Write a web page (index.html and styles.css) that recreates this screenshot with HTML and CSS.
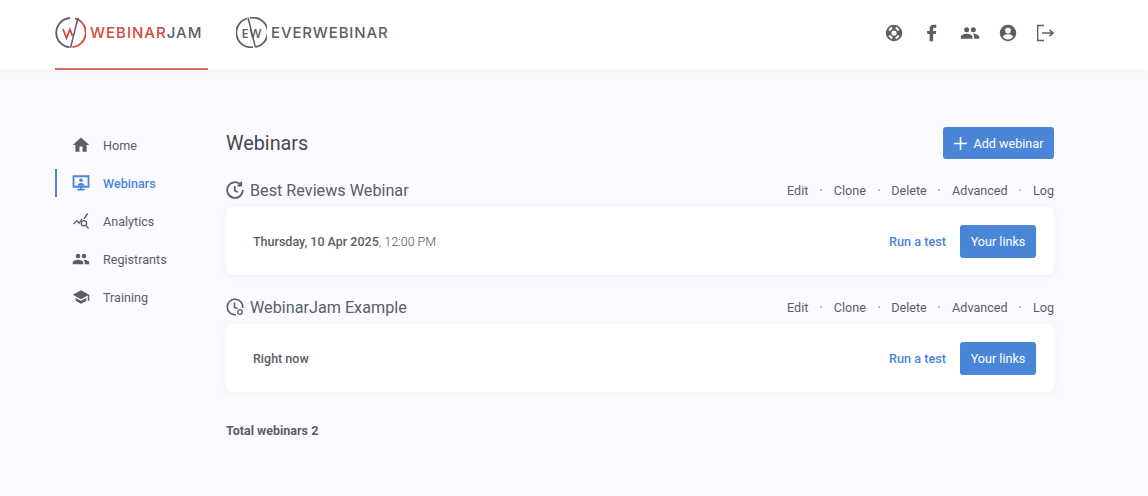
FILE: index.html
```html
<!doctype html>
<html lang="en">
<head>
	<meta charset="UTF-8">
	<title>Webinars</title>
	<link rel="stylesheet" href="styles.css">
</head>
<body>
	<header class="topbar">
		<div class="brands">
			<a class="brand brand-active" href="#">
				<svg class="brand-mark" width="31" height="31" viewBox="0 0 31 31" fill="none">
					<path d="M15 1A14.700 14.700 0 0 0 14.500 30.300" stroke="#5b6067" stroke-width="1.800"/>
					<path d="M20 1.400A14.700 14.700 0 0 1 17.500 30.200" stroke="#d2483b" stroke-width="1.800"/>
					<path d="M23 1 15.500 31" stroke="#5b6067" stroke-width="1.500"/>
					<path d="M8 12 11.500 21 15 12.500 17.500 19" stroke="#d2483b" stroke-width="1.800"/>
				</svg>
				<span class="brand-text"><span class="red">WEBINAR</span>JAM</span>
			</a>
			<a class="brand" href="#">
				<svg class="brand-mark" width="31" height="31" viewBox="0 0 31 31" fill="none">
					<path d="M11 1.500A14.700 14.700 0 0 0 17 30.200" stroke="#5b6067" stroke-width="1.800"/>
					<path d="M14 .9A14.700 14.700 0 0 1 20 29.800" stroke="#5b6067" stroke-width="1.800"/>
					<path d="M12 .5 19.500 30.500" stroke="#5b6067" stroke-width="1.500"/>
					<text x="5.500" y="21" class="mark-text">E</text>
					<text x="13.500" y="21" class="mark-text">W</text>
				</svg>
				<span class="brand-text wide">EVERWEBINAR</span>
			</a>
		</div>
		<nav class="top-icons">
			<a href="#"><svg width="18" height="18" viewBox="0 0 24 24" fill="#5a5e66"><path d="M12 1a11 11 0 1 0 0 22 11 11 0 0 0 0-22zm7.400 7.200-2.800 1.100a5 5 0 0 0-2.900-2.900l1.100-2.800a8.300 8.300 0 0 1 4.600 4.600zM12 15.500a3.500 3.500 0 1 1 0-7 3.500 3.500 0 0 1 0 7zM9.200 3.600l1.100 2.800a5 5 0 0 0-2.900 2.900L4.600 8.200a8.300 8.300 0 0 1 4.600-4.600zM4.600 15.800l2.800-1.100a5 5 0 0 0 2.900 2.900l-1.100 2.800a8.300 8.300 0 0 1-4.600-4.600zm10.200 4.600-1.100-2.800a5 5 0 0 0 2.900-2.900l2.800 1.100a8.300 8.300 0 0 1-4.600 4.600z"/></svg></a>
			<a href="#"><svg width="18" height="18" viewBox="0 0 24 24" fill="#5a5e66"><path d="M8.800 23V13.400H5.600V9.200h3.200V6.500C8.800 3 11 1 14.400 1c1.500 0 2.900.1 3.300.2v3.900h-2.200c-1.700 0-2 .8-2 2v2.100h4l-.5 4.200h-3.500V23z"/></svg></a>
			<a href="#"><svg width="20" height="20" viewBox="0 0 24 24" fill="#5a5e66"><path d="M16 11a3 3 0 1 0 0-6 3 3 0 0 0 0 6zm-8 0a3 3 0 1 0 0-6 3 3 0 0 0 0 6zm0 2c-2.300 0-7 1.200-7 3.500V19h14v-2.500C15 14.200 10.300 13 8 13zm8 0h-1c1.200.9 2 2 2 3.500V19h6v-2.500c0-2.300-4.700-3.500-7-3.500z"/></svg></a>
			<a href="#"><svg width="18" height="18" viewBox="0 0 24 24" fill="#5a5e66"><path d="M12 1a11 11 0 1 0 0 22 11 11 0 0 0 0-22zm0 4a3.800 3.800 0 1 1 0 7.600A3.800 3.800 0 0 1 12 5zm0 15.600c-2.800 0-5.300-1.400-6.800-3.600 0-2.200 4.500-3.400 6.800-3.400s6.800 1.200 6.800 3.400a8.300 8.300 0 0 1-6.800 3.600z"/></svg></a>
			<a href="#"><svg width="18" height="18" viewBox="1 0 18 18" fill="none" stroke="#5a5e66" stroke-width="1.600"><path d="M8 1.500H1.500v15H8"/><path d="M6 9h11M13.500 5.800 17 9l-3.500 3.200"/></svg></a>
		</nav>
	</header>

	<div class="layout">
		<aside class="sidebar">
			<a class="side-item" href="#">
				<svg width="18" height="18" viewBox="0 0 24 24" fill="#5a5e66"><path d="M10 21v-7h4v7h5.500v-9H23L12 2 1 12h3.500v9z"/></svg>
				<span>Home</span>
			</a>
			<a class="side-item active" href="#">
				<svg width="18" height="18" viewBox="0 0 24 24" fill="none"><path d="M2 3h20v14H2z" stroke="#4a86d8" stroke-width="2.400"/><circle cx="12" cy="8.300" r="2.400" fill="#4a86d8"/><path d="M7.500 15.500c0-2.600 2.500-3.600 4.500-3.600s4.500 1 4.500 3.600zM10.800 17h2.400v3h-2.400zM7 19.500h10V22H7z" fill="#4a86d8"/></svg>
				<span>Webinars</span>
			</a>
			<a class="side-item" href="#">
				<svg width="18" height="18" viewBox="0 0 24 24" fill="none" stroke="#5a5e66" stroke-width="1.800"><path d="M2 16l4.500-4.500 3 3.500 4-6M16 9l5-7"/><circle cx="16" cy="15" r="3.500"/><path d="M18.500 17.800 22 22"/></svg>
				<span>Analytics</span>
			</a>
			<a class="side-item" href="#">
				<svg width="20" height="20" viewBox="0 0 24 24" fill="#5a5e66"><path d="M16 11a3 3 0 1 0 0-6 3 3 0 0 0 0 6zm-8 0a3 3 0 1 0 0-6 3 3 0 0 0 0 6zm0 2c-2.300 0-7 1.200-7 3.500V19h14v-2.500C15 14.200 10.300 13 8 13zm8 0h-1c1.200.9 2 2 2 3.500V19h6v-2.500c0-2.300-4.700-3.500-7-3.500z"/></svg>
				<span>Registrants</span>
			</a>
			<a class="side-item" href="#">
				<svg width="20" height="20" viewBox="0 0 24 24" fill="#5a5e66"><path d="M5 13.200v4L12 21l7-3.800v-4L12 17zM12 3 1 9l11 6 9-4.900V17h2V9z"/></svg>
				<span>Training</span>
			</a>
		</aside>

		<main class="content">
			<div class="page-head">
				<h1>Webinars</h1>
				<a class="btn btn-add" href="#"><svg width="13" height="13" viewBox="0 0 13 13" stroke="#fff" stroke-width="1.600"><path d="M6.500 0v13M0 6.500h13"/></svg>Add webinar</a>
			</div>

			<section class="webinar">
				<div class="webinar-head">
					<h2>
						<svg width="18" height="18" viewBox="0 0 18 18" fill="none" stroke="#5a5e66" stroke-width="1.800"><path d="M14.500 3.500A7.800 7.800 0 1 0 16.800 9"/><path d="M15.200.8v3.700h-3.700"/><path d="M8.800 5v4.500l3 1.800"/></svg>
						Best Reviews Webinar
					</h2>
					<div class="actions"><a href="#">Edit</a><i></i><a href="#">Clone</a><i></i><a href="#">Delete</a><i></i><a href="#">Advanced</a><i></i><a href="#">Log</a></div>
				</div>
				<div class="card">
					<div class="when"><b>Thursday, 10 Apr 2025</b>, 12:00 PM</div>
					<a class="run" href="#">Run a test</a>
					<a class="btn" href="#">Your links</a>
				</div>
			</section>

			<section class="webinar">
				<div class="webinar-head">
					<h2>
						<svg width="18" height="18" viewBox="0 0 18 18" fill="none" stroke="#5a5e66" stroke-width="1.600"><path d="M10 16.700A7.800 7.800 0 1 1 16.700 10"/><path d="M8.500 4.500V9.500l3 1"/><circle cx="14" cy="14" r="2.300" stroke-width="1.200"/></svg>
						WebinarJam Example
					</h2>
					<div class="actions"><a href="#">Edit</a><i></i><a href="#">Clone</a><i></i><a href="#">Delete</a><i></i><a href="#">Advanced</a><i></i><a href="#">Log</a></div>
				</div>
				<div class="card">
					<div class="when"><b>Right now</b></div>
					<a class="run" href="#">Run a test</a>
					<a class="btn" href="#">Your links</a>
				</div>
			</section>

			<p class="total">Total webinars 2</p>
		</main>
	</div>
</body>
</html>
```

FILE: styles.css
```css
* { padding: 0; margin: 0; box-sizing: border-box; }
body { background: #fafaff; color: #5a5e66; font-family: Roboto, "Liberation Sans", sans-serif; font-size: 13px; }
a { color: inherit; text-decoration: none; }
svg { display: block; flex: none; }

.topbar { height: 70px; background: #fff; padding: 0 93px 0 55px; display: flex; justify-content: space-between; box-shadow: 0 1px 3px rgba(60, 60, 90, .06); }
.brands { display: flex; gap: 28px; }
.brand { display: flex; align-items: center; gap: 4px; height: 70px; padding-bottom: 3px; border-bottom: 2px solid transparent; }
.brand-active { width: 153px; border-bottom-color: #dc6a60; }
.brand-text { font-family: Inter, "Open Sans", sans-serif; font-size: 15px; font-weight: 500; letter-spacing: 1px; color: #5b6067; }
.brand-text.wide { letter-spacing: .85px; }
.red { color: #d2483b; }
.mark-text { font-family: "Open Sans", sans-serif; font-size: 12.500px; font-weight: 600; fill: #5b6067; }

.top-icons { display: flex; align-items: center; gap: 20px; padding-bottom: 4px; }
.top-icons a { width: 18px; display: flex; justify-content: center; }

.layout { display: flex; padding: 57px 94px 0 55px; }
.sidebar { width: 171px; display: flex; flex-direction: column; gap: 10px; padding-top: 4px; }
.side-item { height: 28px; padding-left: 15px; display: flex; align-items: center; gap: 13px; font-size: 12.600px; border-left: 2px solid transparent; }
.side-item svg { width: 18px; }
.side-item.active { color: #4a86d8; font-weight: 500; border-left-color: #4a86d8; }

.content { flex: 1; }
.page-head { display: flex; justify-content: space-between; align-items: center; height: 32px; }
h1 { font-size: 19.800px; font-weight: 400; color: #45484f; }
.btn { height: 33px; width: 76px; justify-content: center; background: #4a86d8; color: #fff; border-radius: 3px; font-size: 12.600px; display: flex; align-items: center; }
.btn-add { width: 111px; gap: 7px; height: 32px; }

.webinar { margin-top: 19px; }
.webinar + .webinar { margin-top: 20px; }
.webinar-head { display: flex; justify-content: space-between; align-items: center; height: 24px; margin-bottom: 5px; }
h2 { font-size: 16.200px; font-weight: 400; display: flex; align-items: center; gap: 6px; }
.actions { display: flex; align-items: center; font-size: 12.600px; }
.actions i { width: 2px; height: 2px; background: #a9c4ea; margin: 0 11.700px; }
.card { height: 68px; background: #fff; border-radius: 6px; box-shadow: 0 1px 6px rgba(60, 60, 90, .06); padding: 0 18px 0 27px; display: flex; align-items: center; }
.when { flex: 1; font-size: 12.500px; font-weight: 300; color: #50545b; }
.when b { font-weight: 500; color: #5a5e66; }
.run { color: #4a86d8; font-weight: 500; font-size: 12.700px; margin-right: 14px; }
.total { margin-top: 31px; font-size: 12.500px; font-weight: 700; }
```
